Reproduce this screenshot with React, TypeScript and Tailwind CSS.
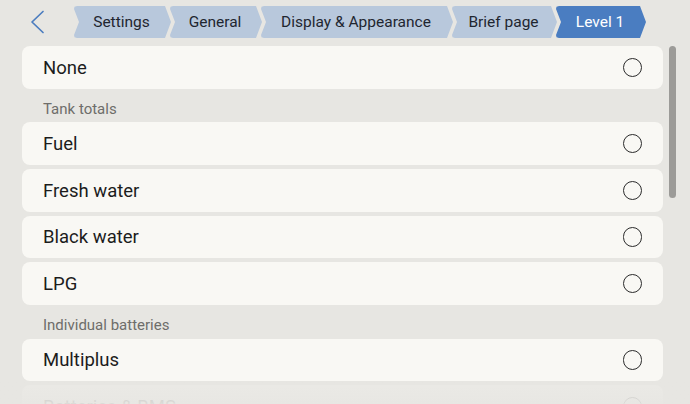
import React from "react";

const crumbs = [
  { label: "Settings", w: "w-[97px]", active: false },
  { label: "General", w: "w-[92px]", active: false },
  { label: "Display & Appearance", w: "w-[192px]", active: false },
  { label: "Brief page", w: "w-[105px]", active: false },
  { label: "Level 1", w: "w-[90px]", active: true },
];

function Radio() {
  return (
    <div className="w-[19.5px] h-[19.5px] rounded-full border-[1.7px] border-[#2b2b2b] shrink-0" />
  );
}

function Row({ label }: { label: string }) {
  return (
    <div className="h-[42.67px] rounded-[8px] bg-[#f9f8f4] flex items-center justify-between pl-[21px] pr-[21px] shrink-0">
      <span className="text-[18.5px] text-[#1c1c1c] leading-none pt-[1px]">{label}</span>
      <Radio />
    </div>
  );
}

function Label({ label }: { label: string }) {
  return (
    <div className="h-[33.67px] pl-[21px] pt-[10px] shrink-0">
      <span className="block text-[15px] leading-[20px] text-[#6e6d6a]">{label}</span>
    </div>
  );
}

export default function App() {
  return (
    <div
      className="relative w-[690px] h-[404px] overflow-hidden bg-[#e7e6e2]"
      style={{ fontFamily: "Roboto, 'Noto Sans', sans-serif" }}
    >
      <div className="h-[46px] flex items-start pt-[6px]">
        <div className="w-[74px] h-[32px] flex items-center pl-[28px]">
          <svg width="18" height="24" viewBox="0 0 18 24" fill="none">
            <path d="M15 1.5 L4 12 L15 22.5" stroke="#4c7dbf" strokeWidth="1.7" strokeLinecap="round" strokeLinejoin="round" />
          </svg>
        </div>
        <div className="flex">
          {crumbs.map((c, i) => (
            <div
              key={c.label}
              className={`${c.w} h-[32px] flex items-center justify-center pr-[2px] pt-[2px] text-[15.5px] leading-none ${
                i > 0 ? "-ml-px" : ""
              } ${c.active ? "bg-[#4a7dc1] text-white" : "bg-[#b8c8dc] text-[#1f2630]"} [clip-path:polygon(3px_0,calc(100%-6px)_0,100%_50%,calc(100%-6px)_100%,3px_100%,0.5px_98%,0_calc(100%-3px),5px_50%,0_3px,0.5px_2%)]`}
            >
              {c.label}
            </div>
          ))}
        </div>
      </div>

      <div className="flex flex-col pl-[22px] pr-[27px]">
        <Row label="None" />
        <Label label="Tank totals" />
        <div className="flex flex-col gap-[4px]">
          <Row label="Fuel" />
          <Row label="Fresh water" />
          <Row label="Black water" />
          <Row label="LPG" />
        </div>
        <Label label="Individual batteries" />
        <div className="flex flex-col gap-[4px]">
          <Row label="Multiplus" />
          <Row label="Batteries & BMS" />
        </div>
      </div>

      <div className="absolute left-[669px] top-[46px] w-[7px] h-[152px] rounded-full bg-[#9c9b98]" />
      <div className="absolute left-0 right-0 bottom-0 h-[22px] bg-gradient-to-b from-[#e7e6e2cc] to-[#e7e6e2f2]" />
    </div>
  );
}
